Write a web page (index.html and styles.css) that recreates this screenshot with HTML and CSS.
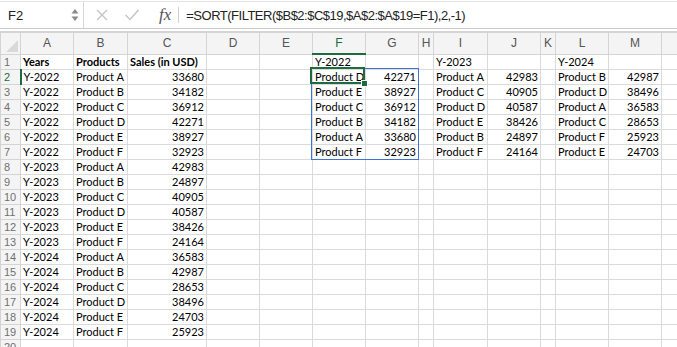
FILE: index.html
```html
<!doctype html>
<html>

<head>
    <meta charset="utf-8">
    <title>Sales by year</title>
    <link rel="stylesheet" href="styles.css">
</head>

<body>
    <div class="formula-bar">
        <div class="name-box">
            <span class="cell-ref">F2</span>
            <svg class="spinner" width="8" height="14" viewBox="0 0 8 14">
                <path d="M4 1 L7.5 5.5 L0.5 5.5 Z" fill="#8a8a8a" />
                <path d="M4 13 L7.5 8.5 L0.5 8.5 Z" fill="#8a8a8a" />
            </svg>
        </div>
        <div class="fb-tools">
            <svg class="tool" width="14" height="14" viewBox="0 0 14 14">
                <path d="M2 2 L12 12 M12 2 L2 12" stroke="#c4c4c4" stroke-width="1.4" fill="none" />
            </svg>
            <svg class="tool" width="16" height="14" viewBox="0 0 16 14">
                <path d="M1.5 7 L6 11.5 L14.5 2" stroke="#c4c4c4" stroke-width="1.4" fill="none" />
            </svg>
            <span class="fx">fx</span>
        </div>
        <div class="formula">=SORT(FILTER($B$2:$C$19,$A$2:$A$19=F1),2,-1)</div>
    </div>

    <div class="sheet">
        <table class="grid">
            <colgroup>
                <col style="width:20px">
                <col style="width:53px">
                <col style="width:54px">
                <col style="width:79px">
                <col style="width:53px">
                <col style="width:53px">
                <col style="width:53px">
                <col style="width:53px">
                <col style="width:15px">
                <col style="width:54px">
                <col style="width:53px">
                <col style="width:15px">
                <col style="width:53px">
                <col style="width:53px">
                <col style="width:40px">
            </colgroup>
            <thead>
                <tr>
                    <th class="corner"><span class="corner-tri"></span></th>
                    <th>A</th>
                    <th>B</th>
                    <th>C</th>
                    <th>D</th>
                    <th>E</th>
                    <th class="active">F</th>
                    <th>G</th>
                    <th>H</th>
                    <th>I</th>
                    <th>J</th>
                    <th>K</th>
                    <th>L</th>
                    <th>M</th>
                    <th></th>
                </tr>
            </thead>
            <tbody>
                <tr>
                    <th>1</th>
                    <td class="b">Years</td><td class="b">Products</td><td class="b">Sales (in USD)</td>
                    <td></td><td></td>
                    <td>Y-2022</td><td></td><td></td>
                    <td>Y-2023</td><td></td><td></td>
                    <td>Y-2024</td><td></td><td></td>
                </tr>
                <tr>
                    <th class="active">2</th>
                    <td>Y-2022</td><td>Product A</td><td class="n">33680</td>
                    <td></td><td></td>
                    <td>Product D</td><td class="n">42271</td><td></td>
                    <td>Product A</td><td class="n">42983</td><td></td>
                    <td>Product B</td><td class="n">42987</td><td></td>
                </tr>
                <tr>
                    <th>3</th>
                    <td>Y-2022</td><td>Product B</td><td class="n">34182</td>
                    <td></td><td></td>
                    <td>Product E</td><td class="n">38927</td><td></td>
                    <td>Product C</td><td class="n">40905</td><td></td>
                    <td>Product D</td><td class="n">38496</td><td></td>
                </tr>
                <tr>
                    <th>4</th>
                    <td>Y-2022</td><td>Product C</td><td class="n">36912</td>
                    <td></td><td></td>
                    <td>Product C</td><td class="n">36912</td><td></td>
                    <td>Product D</td><td class="n">40587</td><td></td>
                    <td>Product A</td><td class="n">36583</td><td></td>
                </tr>
                <tr>
                    <th>5</th>
                    <td>Y-2022</td><td>Product D</td><td class="n">42271</td>
                    <td></td><td></td>
                    <td>Product B</td><td class="n">34182</td><td></td>
                    <td>Product E</td><td class="n">38426</td><td></td>
                    <td>Product C</td><td class="n">28653</td><td></td>
                </tr>
                <tr>
                    <th>6</th>
                    <td>Y-2022</td><td>Product E</td><td class="n">38927</td>
                    <td></td><td></td>
                    <td>Product A</td><td class="n">33680</td><td></td>
                    <td>Product B</td><td class="n">24897</td><td></td>
                    <td>Product F</td><td class="n">25923</td><td></td>
                </tr>
                <tr>
                    <th>7</th>
                    <td>Y-2022</td><td>Product F</td><td class="n">32923</td>
                    <td></td><td></td>
                    <td>Product F</td><td class="n">32923</td><td></td>
                    <td>Product F</td><td class="n">24164</td><td></td>
                    <td>Product E</td><td class="n">24703</td><td></td>
                </tr>
                <tr>
                    <th>8</th>
                    <td>Y-2023</td><td>Product A</td><td class="n">42983</td>
                    <td></td><td></td><td></td><td></td><td></td><td></td><td></td><td></td><td></td><td></td><td></td>
                </tr>
                <tr>
                    <th>9</th>
                    <td>Y-2023</td><td>Product B</td><td class="n">24897</td>
                    <td></td><td></td><td></td><td></td><td></td><td></td><td></td><td></td><td></td><td></td><td></td>
                </tr>
                <tr>
                    <th>10</th>
                    <td>Y-2023</td><td>Product C</td><td class="n">40905</td>
                    <td></td><td></td><td></td><td></td><td></td><td></td><td></td><td></td><td></td><td></td><td></td>
                </tr>
                <tr>
                    <th>11</th>
                    <td>Y-2023</td><td>Product D</td><td class="n">40587</td>
                    <td></td><td></td><td></td><td></td><td></td><td></td><td></td><td></td><td></td><td></td><td></td>
                </tr>
                <tr>
                    <th>12</th>
                    <td>Y-2023</td><td>Product E</td><td class="n">38426</td>
                    <td></td><td></td><td></td><td></td><td></td><td></td><td></td><td></td><td></td><td></td><td></td>
                </tr>
                <tr>
                    <th>13</th>
                    <td>Y-2023</td><td>Product F</td><td class="n">24164</td>
                    <td></td><td></td><td></td><td></td><td></td><td></td><td></td><td></td><td></td><td></td><td></td>
                </tr>
                <tr>
                    <th>14</th>
                    <td>Y-2024</td><td>Product A</td><td class="n">36583</td>
                    <td></td><td></td><td></td><td></td><td></td><td></td><td></td><td></td><td></td><td></td><td></td>
                </tr>
                <tr>
                    <th>15</th>
                    <td>Y-2024</td><td>Product B</td><td class="n">42987</td>
                    <td></td><td></td><td></td><td></td><td></td><td></td><td></td><td></td><td></td><td></td><td></td>
                </tr>
                <tr>
                    <th>16</th>
                    <td>Y-2024</td><td>Product C</td><td class="n">28653</td>
                    <td></td><td></td><td></td><td></td><td></td><td></td><td></td><td></td><td></td><td></td><td></td>
                </tr>
                <tr>
                    <th>17</th>
                    <td>Y-2024</td><td>Product D</td><td class="n">38496</td>
                    <td></td><td></td><td></td><td></td><td></td><td></td><td></td><td></td><td></td><td></td><td></td>
                </tr>
                <tr>
                    <th>18</th>
                    <td>Y-2024</td><td>Product E</td><td class="n">24703</td>
                    <td></td><td></td><td></td><td></td><td></td><td></td><td></td><td></td><td></td><td></td><td></td>
                </tr>
                <tr>
                    <th>19</th>
                    <td>Y-2024</td><td>Product F</td><td class="n">25923</td>
                    <td></td><td></td><td></td><td></td><td></td><td></td><td></td><td></td><td></td><td></td><td></td>
                </tr>
                <tr>
                    <th>20</th>
                    <td></td><td></td><td></td><td></td><td></td><td></td><td></td><td></td><td></td><td></td><td></td><td></td><td></td><td></td>
                </tr>
            </tbody>
        </table>

        <!-- spill range F2:G7 and active cell F2 -->
        <div class="spill-range"></div>
        <div class="active-cell"><span class="fill-handle"></span></div>
    </div>
</body>

</html>
```

FILE: styles.css
```css
html,
body {
    margin: 0;
    padding: 0;
    background: #fff;
    overflow: hidden;
}

body {
    width: 677px;
    height: 347px;
}

/* formula bar */
.formula-bar {
    display: flex;
    align-items: center;
    height: 26px;
    border-top: 1px solid #e4e4e4;
    border-bottom: 1px solid #c9c9c9;
    margin-top: 1px;
    font-family: "Liberation Sans", Arial, sans-serif;
    color: #222;
}

.name-box {
    display: flex;
    align-items: center;
    justify-content: space-between;
    width: 71px;
    height: 100%;
    padding: 0 4px 0 8px;
    border-right: 1px solid #d6d6d6;
}

.cell-ref {
    font-size: 13px;
}

.spinner {
    display: block;
}

.fb-tools {
    display: flex;
    align-items: center;
    gap: 15px;
    padding-left: 11px;
    padding-right: 7px;
    height: 100%;
}

.fx {
    font-family: "Liberation Serif", "Times New Roman", serif;
    font-style: italic;
    font-size: 17px;
    color: #555;
    margin-left: 4px;
    padding-right: 7px;
    border-right: 1px solid #d0d0d0;
    line-height: 16px;
}

.formula {
    font-size: 13px;
    letter-spacing: -0.5px;
    white-space: nowrap;
}

/* sheet */
.sheet {
    position: relative;
    margin-top: 2px;
    border-top: 1px solid #d4d4d4;
    background: #fff;
}

.grid {
    border-collapse: collapse;
    table-layout: fixed;
    width: 701px;
    font-family: Lato, "Open Sans", sans-serif;
    font-size: 11px;
    color: #000;
}

.grid th,
.grid td {
    border: 1px solid #dadada;
    padding: 0 2px;
    height: 14px;
    line-height: 14px;
    white-space: nowrap;
    overflow: hidden;
}

.grid td {
    border-top: none;
    border-left: none;
}

.grid thead th {
    height: 20px;
    background: #f4f4f4;
    font-family: "Liberation Sans", Arial, sans-serif;
    font-weight: 400;
    font-size: 12px;
    color: #555;
    border-color: #d4d4d4;
    text-align: center;
}

.grid thead th.active {
    color: #1e6b3f;
    border-bottom: 2px solid #1e6b3f;
}

.grid tbody th {
    background: #f4f4f4;
    font-family: "Liberation Sans", Arial, sans-serif;
    font-weight: 400;
    font-size: 11px;
    color: #707070;
    text-align: left;
    padding-left: 3px;
    border-color: #d4d4d4;
}

.grid tbody th.active {
    color: #1e6b3f;
    border-right: 2px solid #1e6b3f;
}

.corner {
    position: relative;
}

.corner-tri {
    position: absolute;
    right: 2px;
    bottom: 2px;
    width: 0;
    height: 0;
    border-left: 12px solid transparent;
    border-bottom: 12px solid #d9d9d9;
}

.grid td.b {
    font-weight: 700;
}

.grid td.n {
    text-align: right;
}

/* overlays on top of the grid */
.spill-range {
    position: absolute;
    left: 311px;
    top: 36px;
    width: 106px;
    height: 90px;
    border: 1px solid #3f74cf;
    pointer-events: none;
}

.active-cell {
    position: absolute;
    left: 310px;
    top: 35px;
    width: 51px;
    height: 13px;
    border: 2px solid #1e6b3f;
    pointer-events: none;
}

.fill-handle {
    position: absolute;
    right: -5px;
    bottom: -5px;
    width: 5px;
    height: 5px;
    background: #1e6b3f;
    border: 1px solid #fff;
}
```
